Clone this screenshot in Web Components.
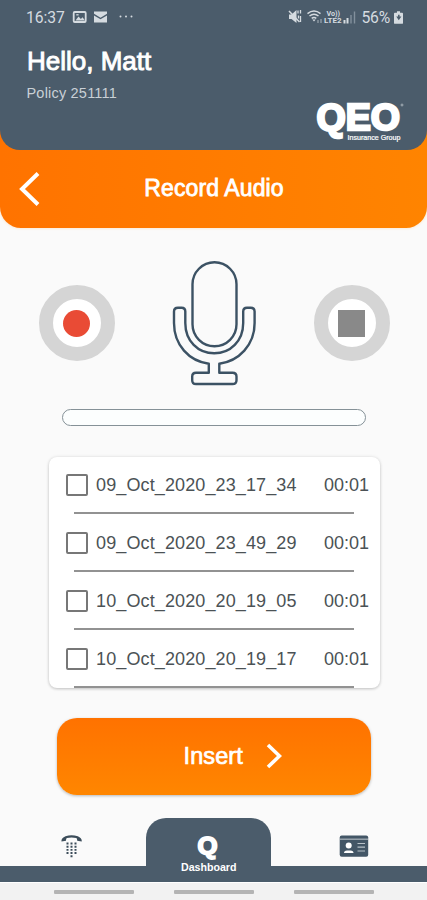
<!DOCTYPE html>
<html lang="en"><head><meta charset="utf-8"><title>Record Audio</title>
<style>
html,body{margin:0;padding:0;background:#fafafa}
body{width:427px;height:900px;overflow:hidden;font-family:"Liberation Sans",Arial,sans-serif}
</style></head><body><qeo-app></qeo-app>
<script>
function define(name, markup){
  const t=document.createElement('template');t.innerHTML=markup;
  customElements.define(name,class extends HTMLElement{
    constructor(){super();this.attachShadow({mode:'open'}).append(t.content.cloneNode(true));}
  });
}

define('status-bar',`<style>
:host{display:flex;justify-content:space-between;align-items:center;height:34px;padding:0 24px 0 26px;font:15.7px Roboto,sans-serif;color:#d5dbe0}
div{display:flex;align-items:center}svg{display:block}
.t{letter-spacing:-.05px}
</style>
<div><span class="t">16:37</span>
<svg style="margin-left:7px" width="65" height="16" viewBox="0 0 65 16"><rect x="1.7" y="3" width="12" height="10" rx="1" fill="none" stroke="currentColor" stroke-width="1.8"/><path d="M3.500 11.500l3-4 2.400 2.500 1.600-1.700 2.500 3.200z" fill="currentColor"/><path d="M4.300 5.800h2.300" stroke="currentColor" stroke-width="1.300"/>
<path d="M22 2.500h13v2.300l-6.500 3.900L22 4.800z" fill="currentColor"/><path d="M22 6.400l6.500 3.900L35 6.400v7.200H22z" fill="currentColor"/>
<g fill="currentColor"><circle cx="48.500" cy="7.500" r="1"/><circle cx="54" cy="7.500" r="1"/><circle cx="59.500" cy="7.500" r="1"/></g></svg></div>
<div><svg width="70" height="18" viewBox="0 0 70 18"><g fill="currentColor"><path d="M2 6.500h2.500l5-4.500v13l-5-4H2z"/><path d="M11 2.500v3M13.500 2v3.500M11.500 7.500v3M13.500 8v6" stroke="currentColor" stroke-width="1.300"/></g><path d="M2 3l10.500 11" stroke="currentColor" stroke-width="1.500"/>
<g fill="none" stroke="currentColor" stroke-width="1.500"><path d="M20.500 5.600q6.500-5.200 13 0M22.500 8q4.500-3.600 9 0M24.700 10.300q2.300-1.800 4.600 0"/></g><path d="M27 13.500l-1.700-2h3.400z" fill="currentColor"/><path d="M31 12v3M34 11v4" stroke="#94a0aa" stroke-width="1.300"/>
<text x="39.500" y="8" font-family="Roboto" font-weight="700" font-size="7.200" textLength="13.500" lengthAdjust="spacingAndGlyphs" fill="currentColor">Vo))</text><text x="37" y="15.300" font-family="Roboto" font-weight="700" font-size="7.800" textLength="17.500" lengthAdjust="spacingAndGlyphs" fill="currentColor">LTE2</text>
<path d="M57.500 12v3.500M60.500 10v5.500" stroke="currentColor" stroke-width="2"/><path d="M64 7v8.500M67.500 3.500v12" stroke="#82909c" stroke-width="1.400"/></svg>
<span style="margin-left:4.500px;letter-spacing:-.2px">56%</span>
<svg style="margin-left:4px" width="9" height="13" viewBox="0 0 10 14"><path d="M3.300 0h3.400v1.700H9q1 0 1 1V13q0 1-1 1H1q-1 0-1-1V2.700q0-1 1-1h2.300z" fill="currentColor"/><path d="M2.500 6h2V4h1.700v2h2L5.300 10z" fill="#4b5c6b"/></svg></div>`);

define('brand-logo',`<style>:host{display:block}svg{display:block;overflow:visible}</style>
<svg width="90" height="44" viewBox="0 0 90 44" fill="#fff"><text x="3.500" y="30" font-family="Liberation Sans" font-weight="700" font-size="37" textLength="83.500" lengthAdjust="spacingAndGlyphs" stroke="#fff" stroke-width="2.500">QEO</text>
<circle cx="89" cy="5" r="1" fill="none" stroke="#c3cad0" stroke-width=".7"/>
<text x="34.500" y="40" font-family="Liberation Sans" font-size="6.400" textLength="53" lengthAdjust="spacingAndGlyphs" stroke="#fff" stroke-width=".2">Insurance Group</text></svg>`);

define('user-header',`<style>
:host{display:flex;flex-direction:column;height:149.500px;box-sizing:border-box;background:#4b5c6b;border-radius:0 0 20px 20px;color:#fff;position:relative}
h1{margin:11px 0 0 27px;font:400 26px/32px "Liberation Sans";-webkit-text-stroke:.9px #fff}
p{margin:7px 0 0 26.500px;font-size:14.500px;line-height:18px;letter-spacing:.2px;color:#c9d0d6}
brand-logo{align-self:flex-end;margin:-2px 24px 0 0}
</style><status-bar></status-bar><h1><slot name="greeting"></slot></h1><p><slot name="policy"></slot></p><brand-logo></brand-logo>`);

define('title-bar',`<style>
:host{display:grid;grid-template-columns:40px 1fr 40px;align-items:center;height:108px;box-sizing:border-box;padding-top:30px;margin-top:-30px;background:linear-gradient(90deg,#ff7300,#ff8400);border-radius:0 0 21px 21px;color:#fff;box-shadow:0 0 3px #ffdcb8}
h2{margin:-2px 0 0 1px;text-align:center;font:400 23px/28px "Liberation Sans";letter-spacing:.12px;-webkit-text-stroke:.8px #fff}
svg{display:block;margin-left:19px}
</style><svg width="22" height="34" viewBox="0 0 22 34"><path d="M19 1.500L3 17l16 15.500" fill="none" stroke="#fff" stroke-width="4"/></svg><h2><slot></slot></h2>`);

define('round-button',`<style>
:host{display:flex;align-items:center;justify-content:center;width:76px;height:76px;box-sizing:border-box;border:14px solid #d5d5d5;border-radius:50%;background:#fff}
i{display:block;width:27px;height:27px;background:#898989}
:host([kind=record]) i{background:#e94b35;border-radius:50%}
</style><i></i>`);

define('mic-icon',`<style>:host{display:block}svg{display:block}</style>
<svg width="86" height="128" viewBox="171 259 86 128" fill="none" stroke="#3c5264" stroke-width="2.400" stroke-linejoin="round">
<rect x="192.500" y="262.300" width="44" height="84" rx="22"/>
<path d="M174 311.500Q174 307.700 178 307.700H181.500Q185.300 307.700 185.300 311.500V323C185.300 341 198 353.300 214.200 353.300S243.200 341 243.200 323V311.500Q243.200 307.700 247 307.700H250.700Q254.600 307.700 254.600 311.500V323C254.600 345 239 361 219.300 363.700V372.700H232.500Q236.500 372.700 236.500 376.500V380.200Q236.500 384 232.500 384H196Q192.200 384 192.200 380.200V376.500Q192.200 372.700 196 372.700H208.800V363.700C189 361 174 345 174 323Z"/></svg>`);

define('recorder-controls',`<style>
:host{display:flex;flex-direction:column;align-items:center;padding-top:31.500px}
.r{display:flex;align-items:center;gap:56.500px;padding-left:1px}
.p{width:304px;height:17px;box-sizing:border-box;border:1px solid #859197;border-radius:9px;background:#fcfefe;margin-top:22px}
</style><div class="r"><round-button kind="record"></round-button><mic-icon></mic-icon><round-button kind="stop"></round-button></div><div class="p"></div>`);

define('audio-row',`<style>
:host{display:block;height:58px;flex:none}
.r{display:flex;align-items:center;height:55px;padding:0 11px 0 17px;color:#4b5255;font-size:18px;line-height:22px}
i{width:22px;height:22px;box-sizing:border-box;border:2px solid #777;border-radius:2px;margin-right:8px}
.n{flex:1;letter-spacing:.12px}
hr{margin:0 26px 0 25px;border:0;height:1.500px;background:#929292}
</style><div class="r"><i></i><span class="n"><slot></slot></span><slot name="time"></slot></div><hr>`);

define('audio-list',`<style>
:host{display:flex;flex-direction:column;width:331px;height:231px;margin:31px 0 0 49px;box-sizing:border-box;background:#fff;border-radius:8px;overflow:hidden;box-shadow:0 1px 3px #0003,0 0 4px #0001}
</style><slot></slot>`);

define('insert-button',`<style>
:host{display:flex;align-items:center;width:314px;height:77px;box-sizing:border-box;margin:30px 0 0 57px;padding:0 0 1px 126.500px;border-radius:20px;background:linear-gradient(#ff7200,#ff8600);color:#fff;box-shadow:0 1px 3px #0004;font-size:23.500px;line-height:28px;letter-spacing:.1px;-webkit-text-stroke:.7px #fff}
svg{margin-left:23px}
</style><slot></slot><svg width="16" height="26" viewBox="0 0 16 26"><path d="M2 2l11.500 11L2 24" fill="none" stroke="#fff" stroke-width="3.600"/></svg>`);

define('bottom-nav',`<style>
:host{display:grid;grid-template-columns:146px 124.500px 1fr;height:64px;margin-top:23px;background:linear-gradient(transparent 48px,#4b5c6b 48px)}
.tab{background:#4b5c6b;border-radius:20px 20px 0 0}
svg{display:block}
.call{margin:17px 0 0 61px}.card{margin:17px 0 0 68px}
</style>
<svg class="call" width="22" height="24" viewBox="0 0 22 24" fill="#3c4d5a"><path d="M.5 6.500Q0 3.200 4.500 1.300Q10.500-.9 16.800 1.300Q21.200 3.200 20.700 6.500L16.200 5.800Q16.300 3.500 15.200 3.100Q10.500 1.900 6 3.100Q4.900 3.500 5 5.800Z"/><path d="M5.500 8.500h2M9.500 8.500h2M13.500 8.500h2M5.500 11.700h2M9.500 11.700h2M13.500 11.700h2M5.500 14.900h2M9.500 14.900h2M13.500 14.900h2M5.500 18h2M9.500 18h2M13.500 18h2M9.500 21.200h2" stroke="#3c4d5a" stroke-width="1.900"/></svg>
<div class="tab"><svg width="124" height="64" viewBox="0 0 124 64" fill="#fff"><text x="51.500" y="36" font-family="Liberation Sans" font-weight="700" font-size="24" stroke="#fff" stroke-width="1.800" textLength="20" lengthAdjust="spacingAndGlyphs">Q</text><text x="35" y="53" font-family="Liberation Sans" font-weight="700" font-size="10.500" textLength="55.500" lengthAdjust="spacingAndGlyphs">Dashboard</text></svg></div>
<svg class="card" width="30" height="23" viewBox="0 0 30 23"><rect x=".7" y=".5" width="28.500" height="21.300" rx="2" fill="#435666"/><path d="M1 4.200h28" stroke="#a5afb7" stroke-width="1.300"/><circle cx="9.700" cy="10.500" r="3" fill="#fff"/><path d="M5 18q0-2.500 3-2.500h3.500q3 0 3 2.500z" fill="#fff"/><path d="M18.500 8.500h7.500M18.500 12.200h7.500M18.500 16h7.500" stroke="#b8c1c8" stroke-width="1.200"/></svg>`);

define('system-nav',`<style>
:host{display:flex;justify-content:center;gap:40px;height:18px;box-sizing:border-box;padding:6.500px 0 0 1px;background:#f2f2f2;border-top:1px solid #fff}
i{width:80px;height:4px;border-radius:1px;background:#b4b4b4}
</style><i></i><i></i><i></i>`);

define('qeo-app',`<style>
:host{display:flex;flex-direction:column;width:427px;height:900px;background:#fafafa;overflow:hidden}
</style>
<user-header style="z-index:1"><span slot="greeting">Hello, Matt</span><span slot="policy">Policy 251111</span></user-header>
<title-bar>Record Audio</title-bar>
<recorder-controls></recorder-controls>
<audio-list>
<audio-row>09_Oct_2020_23_17_34<span slot="time">00:01</span></audio-row>
<audio-row>09_Oct_2020_23_49_29<span slot="time">00:01</span></audio-row>
<audio-row>10_Oct_2020_20_19_05<span slot="time">00:01</span></audio-row>
<audio-row>10_Oct_2020_20_19_17<span slot="time">00:01</span></audio-row>
</audio-list>
<insert-button>Insert</insert-button>
<bottom-nav></bottom-nav>
<system-nav></system-nav>`);
</script></body></html>
